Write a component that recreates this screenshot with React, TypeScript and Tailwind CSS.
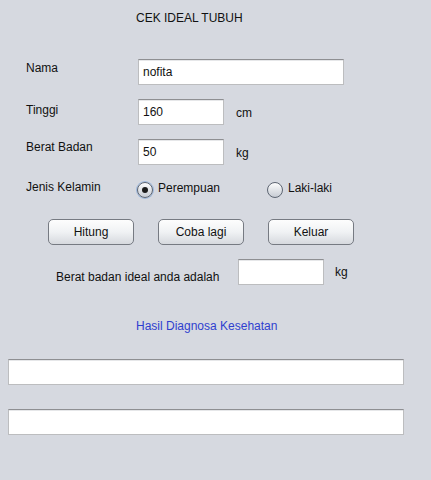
const field = "bg-white border border-[#bcbdbf] border-t-[#8e8f92] shadow-[inset_0_1px_0_#e6e7e9] h-[26px] px-[4px] text-[12px] leading-[14px] text-[#111] outline-none font-['Liberation_Sans',Arial,sans-serif]";

function Field({ width, value }: { width: string; value?: string }) {
  return <input className={`${field} ${width}`} defaultValue={value} />;
}

function Radio({ label, checked, width }: { label: string; checked?: boolean; width: string }) {
  return (
    <label className={`flex items-start gap-[5px] ${width}`}>
      <span
        className={`mt-[3px] flex h-[16px] w-[16px] items-center justify-center rounded-full border border-[#5d6572] bg-gradient-to-b from-[#fdfdfd] to-[#c7ccd4] ${
          checked ? "shadow-[0_0_0_1px_#9db8dc]" : ""
        }`}
      >
        {checked && <span className="h-[6px] w-[6px] rounded-full bg-[#1b1b1b]" />}
      </span>
      <span className="mt-[2px]">{label}</span>
    </label>
  );
}

function Button({ children }: { children: string }) {
  return (
    <button className="flex h-[26px] w-[86px] items-center justify-center rounded-[5px] border border-[#767a82] bg-gradient-to-b from-[#fdfdfd] via-[#f0f2f4] to-[#d6d9de] text-[12px] text-[#111]">
      {children}
    </button>
  );
}

export default function App() {
  return (
    <div className="flex h-[480px] w-[431px] flex-col bg-[#d6d9e0] font-['Liberation_Sans',Arial,sans-serif] text-[12px] leading-[14px] text-[#111]">
      <div className="mt-[11px] pl-[136px]">CEK IDEAL TUBUH</div>

      <div className="mt-[34px] flex items-start pl-[26px]">
        <span className="mt-[2px] w-[112px]">Nama</span>
        <Field width="w-[206px]" value="nofita" />
      </div>

      <div className="mt-[14px] flex items-start pl-[26px]">
        <span className="mt-[4px] w-[112px]">Tinggi</span>
        <Field width="w-[86px]" value="160" />
        <span className="ml-[12px] mt-[7px]">cm</span>
      </div>

      <div className="mt-[14px] flex items-start pl-[26px]">
        <span className="mt-[1px] w-[112px]">Berat Badan</span>
        <Field width="w-[86px]" value="50" />
        <span className="ml-[12px] mt-[7px]">kg</span>
      </div>

      <div className="mt-[14px] flex items-start pl-[26px]">
        <span className="mt-[1px] w-[111px]">Jenis Kelamin</span>
        <Radio label="Perempuan" checked width="w-[130px]" />
        <Radio label="Laki-laki" width="w-[100px]" />
      </div>

      <div className="mt-[21px] flex gap-[24px] pl-[48px]">
        <Button>Hitung</Button>
        <Button>Coba lagi</Button>
        <Button>Keluar</Button>
      </div>

      <div className="mt-[14px] flex items-start pl-[56px]">
        <span className="mt-[11px] w-[182px]">Berat badan ideal anda adalah</span>
        <Field width="w-[86px]" />
        <span className="ml-[11px] mt-[6px]">kg</span>
      </div>

      <div className="mt-[34px] pl-[136px] text-[#2f3fcf]">Hasil Diagnosa Kesehatan</div>

      <div className="mt-[26px] flex flex-col gap-[24px] pl-[8px]">
        <Field width="w-[396px]" />
        <Field width="w-[396px]" />
      </div>
    </div>
  );
}
